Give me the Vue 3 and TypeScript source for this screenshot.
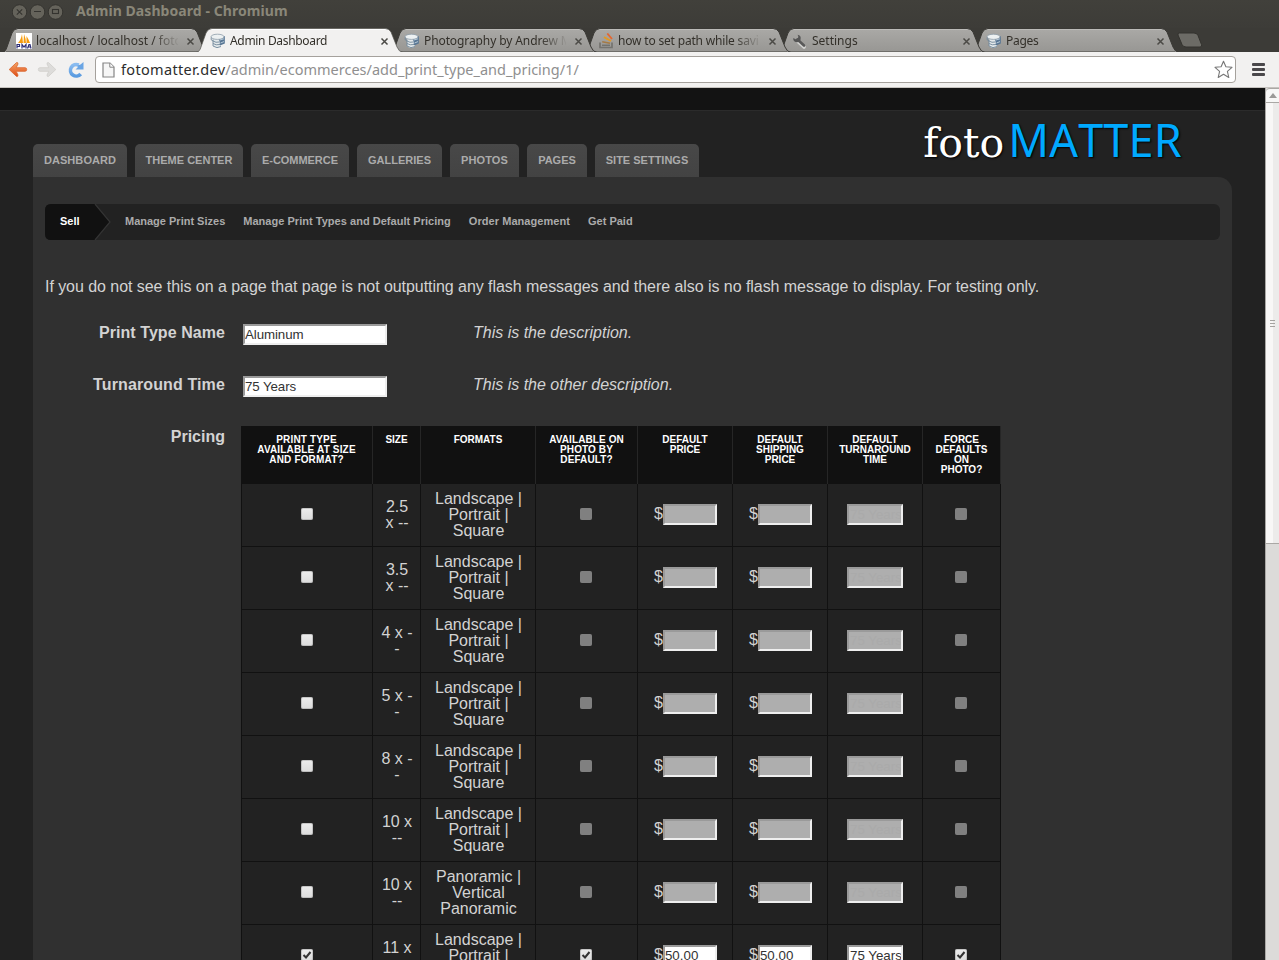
<script setup lang="ts">
interface BrowserTab {
  title: string
  icon: 'pma' | 'db' | 'stack' | 'wrench'
  active?: boolean
  spacing: string
}

interface PriceRow {
  size: string[]
  formats: string[]
  enabled: boolean
}

const tabs: BrowserTab[] = [
  { title: 'localhost / localhost / foto', icon: 'pma', spacing: 'a' },
  { title: 'Admin Dashboard', icon: 'db', active: true, spacing: 'b' },
  { title: 'Photography by Andrew M', icon: 'db', spacing: 'c' },
  { title: 'how to set path while savi', icon: 'stack', spacing: 'd' },
  { title: 'Settings', icon: 'wrench', spacing: 'e' },
  { title: 'Pages', icon: 'db', spacing: 'f' },
]

const nav = ['Dashboard', 'Theme Center', 'E-Commerce', 'Galleries', 'Photos', 'Pages', 'Site Settings']
const subnav = ['Manage Print Sizes', 'Manage Print Types and Default Pricing', 'Order Management', 'Get Paid']

const headers: string[][] = [
  ['Print Type', 'Available at Size', 'and Format?'],
  ['Size'],
  ['Formats'],
  ['Available on', 'Photo by', 'Default?'],
  ['Default', 'Price'],
  ['Default', 'Shipping', 'Price'],
  ['Default', 'Turnaround', 'Time'],
  ['Force', 'Defaults', 'on', 'Photo?'],
]

const lps = ['Landscape |', 'Portrait |', 'Square']
const rows: PriceRow[] = [
  { size: ['2.5', 'x --'], formats: lps, enabled: false },
  { size: ['3.5', 'x --'], formats: lps, enabled: false },
  { size: ['4 x -', '-'], formats: lps, enabled: false },
  { size: ['5 x -', '-'], formats: lps, enabled: false },
  { size: ['8 x -', '-'], formats: lps, enabled: false },
  { size: ['10 x', '--'], formats: lps, enabled: false },
  { size: ['10 x', '--'], formats: ['Panoramic |', 'Vertical', 'Panoramic'], enabled: false },
  { size: ['11 x', '--'], formats: lps, enabled: true },
]
</script>

<template>
  <div class="window">
    <div class="titlebar">
      <svg class="controls" width="52" height="16" viewBox="0 0 52 16">
        <g fill="#65635b" stroke="#34332f" stroke-width="1">
          <circle cx="7.5" cy="8" r="7.3" />
          <circle cx="25.5" cy="8" r="7.3" />
          <circle cx="43.5" cy="8" r="7.3" />
        </g>
        <g fill="none" stroke="#34332f" stroke-width="1.1">
          <path d="M4.8 5.3l5.4 5.4M10.2 5.3l-5.4 5.4M22 7.500h7" />
          <rect x="40.500" y="5.500" width="6" height="4" />
        </g>
      </svg>
      <span class="wintitle">Admin Dashboard - Chromium</span>
    </div>

    <div class="tabstrip">
      <div v-for="t in tabs" :key="t.title" class="tab" :class="[{ active: t.active }, 'sp-' + t.spacing]">
        <svg class="tabshape" width="208" height="24" viewBox="0 0 208 24">
          <defs>
            <linearGradient id="inactiveTab" x1="0" y1="0" x2="0" y2="1">
              <stop offset="0" stop-color="#aaa9a6" />
              <stop offset="1" stop-color="#979693" />
            </linearGradient>
          </defs>
          <path class="body" d="M0 24.5C3 24 4 22 5 19L10 5Q12 .5 16 .5H189Q193 .5 195 4L201 19Q203 24 207 24.5Z" :fill="t.active ? '#f2f1f0' : 'url(#inactiveTab)'" />
          <path v-if="!t.active" d="M4 23.5H203" stroke="#6f6e6a" />
          <path class="shine" d="M15 1.5H190" />
          <path class="edge" d="M0 24.5C3 24 4 22 5 19L10 5Q12 .5 16 .5H189Q193 .5 195 4L201 19Q203 24 207 24.5" />
        </svg>
        <svg v-if="t.icon === 'pma'" class="favicon" width="16" height="16" viewBox="0 0 16 16">
          <rect width="16" height="16" fill="#fff" />
          <path d="M2 10Q5 7 6 1L7 10ZM7.5 10L8 1Q10 6 10 10ZM10.5 10L10.5 3Q13 7 14 10Z" fill="#f69c0e" />
          <path d="M1 15.5V11.5H3.5V13.5H1M6 15.5V11.5L8 14L10 11.5V15.5M11.5 15.5L13 11.5H14L15 15.5M12 14H15" fill="none" stroke="#2d2f78" stroke-width="1.2" />
        </svg>
        <svg v-else-if="t.icon === 'db'" class="favicon" width="16" height="16" viewBox="0 0 16 16">
          <path d="M3 4V13Q6.500 16.500 11 13.500V4Z" fill="#e3e8ea" />
          <path d="M9 5L14.800 3V10.500L10 12.500Z" fill="#587694" />
          <ellipse cx="7.500" cy="3.800" rx="6.500" ry="2.600" fill="#edf1f2" stroke="#8d9ca8" stroke-width=".8" />
          <path d="M1.200 4.500V6.800L3 8M3 8Q6 10 9 9M3 10.500Q6 12.500 10 11.500M3 13Q7 16 11 13.500M3 6.500V13" fill="none" stroke="#72889b" stroke-width=".9" />
          <path d="M10 7L14 5.800M10.500 10L14 8.600" stroke="#b8cad8" />
        </svg>
        <svg v-else-if="t.icon === 'stack'" class="favicon" width="16" height="16" viewBox="0 0 16 16">
          <path d="M2 9.500V14.500H14V9.500" fill="none" stroke="#74736f" stroke-width="1.700" />
          <path d="M4 12.300H12" stroke="#74736f" stroke-width="1.500" />
          <path d="M4.200 8.700L12 10.300" stroke="#a57a45" stroke-width="1.600" />
          <path d="M6 4.200L13 8" stroke="#e29824" stroke-width="1.900" />
          <path d="M9.300.5L14 6" stroke="#e6652e" stroke-width="1.800" />
        </svg>
        <svg v-else class="favicon" width="16" height="16" viewBox="0 0 16 16">
          <path d="M6 7L12.500 13" stroke="#d3d3d1" stroke-width="3.600" stroke-linecap="round" transform="translate(-.5 1)" />
          <path d="M5.500 6.500L12 12.500" stroke="#595959" stroke-width="2.600" stroke-linecap="round" />
          <path d="M5.500 1.800A3.700 3.700 0 1 1 1.300 5L3.600 6.200L6 5.300L6.300 3.200Z" fill="#555" />
        </svg>
        <span class="tabtitle"><span>{{ t.title }}</span></span>
        <svg class="tabclose" width="9" height="9" viewBox="0 0 9 9"><path d="M1.500 1.500l6 6M7.500 1.500l-6 6" /></svg>
      </div>
      <svg class="newtab" width="28" height="17" viewBox="0 0 28 17">
        <path d="M3.500 1H18Q21 1 22 3.500L25.500 12.500Q26.500 15 24 15H10Q7 15 6 12.500L2 3Q1.500 1 3.500 1Z" fill="#6c6b66" stroke="#33322e" />
      </svg>
    </div>

    <div class="toolbar">
      <svg class="navicons" width="78" height="22" viewBox="0 0 78 22">
        <defs>
          <linearGradient id="backArrow" x1="0" y1="0" x2="0" y2="1">
            <stop offset="0" stop-color="#f5a566" />
            <stop offset="1" stop-color="#de4d18" />
          </linearGradient>
          <linearGradient id="reloadBlue" x1="0" y1="0" x2="0" y2="1">
            <stop offset="0" stop-color="#8abcf0" />
            <stop offset="1" stop-color="#5a9be0" />
          </linearGradient>
        </defs>
        <path d="M1.200 10.500L8.500 3.600Q10 3 10 5L8.200 8.700H17Q18.700 8.700 18.700 10.500T17 12.300H8.200L10 16Q10 18 8.500 17.400Z" fill="url(#backArrow)" stroke="#d9662f" stroke-width=".8" />
        <path d="M47.800 10.500L40.500 3.600Q39 3 39 5L40.800 8.700H32Q30.300 8.700 30.300 10.500T32 12.300H40.800L39 16Q39 18 40.500 17.400Z" fill="#dddcda" stroke="#cfceca" stroke-width=".8" />
        <path d="M71.500 6A5.800 5.800 0 1 0 73.500 15" fill="none" stroke="url(#reloadBlue)" stroke-width="3.600" transform="translate(-.8 0)" />
        <path d="M75.500 3V10.500H67.500L70 8L69.500 6.500L72.500 5.500Z" fill="#6aa5e4" />
      </svg>
      <div class="omnibox">
        <svg class="page" width="13" height="16" viewBox="0 0 13 16">
          <path d="M1 1H8L12 5V15H1Z" fill="#f6f6f6" stroke="#858585" stroke-width="1.200" />
          <path d="M7.800 1V5.200H12" fill="#fff" stroke="#858585" />
        </svg>
        <span class="host">fotomatter.dev</span><span class="path">/admin/ecommerces/add_print_type_and_pricing/1/</span>
        <svg class="star" width="19" height="19" viewBox="0 0 19 19">
          <path d="M9.500 1.200L11.900 6.800L18 7.300L13.400 11.300L14.800 17.500L9.500 14.200L4.200 17.500L5.600 11.300L1 7.300L7.100 6.800Z" fill="#fff" stroke="#777" stroke-width="1.100" stroke-linejoin="round" />
        </svg>
      </div>
      <div class="menu"><i></i><i></i><i></i></div>
    </div>

    <div class="viewport">
      <main class="site">
        <div class="topbar"></div>
        <header class="head">
          <nav class="nav"><a v-for="n in nav" :key="n">{{ n }}</a></nav>
          <div class="logo"><span class="foto">foto</span><span class="matter">MATTER</span></div>
        </header>
        <section class="panel">
          <div class="subnav">
            <div class="sell">
              <svg class="sellshape" width="66" height="36" viewBox="0 0 66 36">
                <path d="M6 0H50L64.500 18L50 36H6Q0 36 0 30V6Q0 0 6 0Z" fill="#111" />
                <path d="M50 0L65 18L50 36" fill="none" stroke="#343434" stroke-width="1.200" />
              </svg>
              <span>Sell</span>
            </div>
            <a v-for="s in subnav" :key="s">{{ s }}</a>
          </div>
          <p class="flash">If you do not see this on a page that page is not outputting any flash messages and there also is no flash message to display. For testing only.</p>
          <div class="field">
            <label>Print Type Name</label><div class="box wide">Aluminum</div><em>This is the description.</em>
          </div>
          <div class="field">
            <label class="snug">Turnaround Time</label><div class="box wide">75 Years</div><em>This is the other description.</em>
          </div>
          <div class="field pricing">
            <label>Pricing</label>
            <table>
              <colgroup>
                <col class="c1" /><col class="c2" /><col class="c3" /><col class="c4" />
                <col class="c5" /><col class="c5" /><col class="c5" /><col class="c8" />
              </colgroup>
              <thead>
                <tr>
                  <th v-for="(h, i) in headers" :key="i"><div v-for="l in h" :key="l">{{ l }}</div></th>
                </tr>
              </thead>
              <tbody>
                <tr v-for="(r, i) in rows" :key="i" :class="{ off: !r.enabled }">
                  <td><span class="check"><svg v-if="r.enabled" width="12" height="12" viewBox="0 0 12 12"><path d="M2.500 6L5 8.500L9.500 3" /></svg></span></td>
                  <td class="lines"><div v-for="l in r.size" :key="l">{{ l }}</div></td>
                  <td class="lines"><div v-for="l in r.formats" :key="l">{{ l }}</div></td>
                  <td class="even"><span class="check dim"><svg v-if="r.enabled" width="12" height="12" viewBox="0 0 12 12"><path d="M2.500 6L5 8.500L9.500 3" /></svg></span></td>
                  <td v-for="k in 2" :key="k"><div class="money"><span>$</span><div class="box price">{{ r.enabled ? '50.00' : '' }}</div></div></td>
                  <td><div class="box time">75 Years</div></td>
                  <td class="even"><span class="check dim"><svg v-if="r.enabled" width="12" height="12" viewBox="0 0 12 12"><path d="M2.500 6L5 8.500L9.500 3" /></svg></span></td>
                </tr>
              </tbody>
            </table>
          </div>
        </section>
      </main>
      <aside class="scrollbar">
        <div class="up"><svg width="8" height="5" viewBox="0 0 8 5"><path d="M4 0L8 5H0Z" fill="#9b9a98" /></svg></div>
        <div class="thumb"><i></i><i></i><i></i></div>
      </aside>
    </div>
  </div>
</template>

<style>
body { margin: 0; overflow: hidden; }
</style>

<style scoped>
.window { width: 1279px; height: 960px; overflow: hidden; display: flex; flex-direction: column; font-family: "Liberation Sans", Arial, sans-serif; background: #3c3b37; }
.titlebar { height: 28px; flex: none; display: flex; align-items: flex-start; background: linear-gradient(#41403b, #3d3c38); box-sizing: border-box; padding-left: 12px; }
.controls { margin-top: 4px; }
.wintitle { margin-left: 12px; font: 700 14px/22px "Noto Sans", sans-serif; color: #8a8779; letter-spacing: 0.07px; white-space: nowrap; }
.tabstrip { height: 24px; flex: none; display: flex; padding-left: 2px; background: #3c3b37; position: relative; }
.tab { position: relative; width: 194px; height: 24px; flex: none; display: flex; align-items: center; box-sizing: border-box; padding-left: 14px; font: 12px/24px "Noto Sans", sans-serif; color: #33302a; }
.tab:nth-child(1) { z-index: 6; }
.tab:nth-child(2) { z-index: 9; }
.tab:nth-child(3) { z-index: 5; }
.tab:nth-child(4) { z-index: 4; }
.tab:nth-child(5) { z-index: 3; }
.tab:nth-child(6) { z-index: 2; }
.tabshape { position: absolute; left: 0; top: 0; }
.edge { fill: none; stroke: #3a3935; }
.active .edge { stroke: #55544f; stroke-width: .7; }
.shine { stroke: #bcbbb8; }
.active .shine { stroke: #fff; }
.favicon { position: relative; top: 1px; flex: none; }
.tabtitle { position: relative; top: 1px; margin-left: 4px; width: 142px; height: 24px; flex: none; overflow: hidden; white-space: nowrap; mask-image: linear-gradient(90deg, #000 116px, transparent 144px); }
.tabclose { position: relative; top: 1px; margin-left: 7.500px; flex: none; }
.tabclose path { stroke: #4b4a46; stroke-width: 1.5; fill: none; }
.sp-b { letter-spacing: -0.33px; }
.sp-c { letter-spacing: -0.1px; }
.sp-d { letter-spacing: -0.18px; }
.sp-f { letter-spacing: -0.3px; }
.newtab { margin-left: 10px; margin-top: 4px; }
.toolbar { height: 36px; flex: none; display: flex; align-items: flex-start; background: #f2f1f0; border-bottom: 1px solid #c6c3bf; box-sizing: border-box; padding-left: 8px; }
.navicons { margin-top: 7px; flex: none; }
.omnibox { margin: 4px 0 0 9px; width: 1141px; height: 27px; box-sizing: border-box; border: 1px solid #a5a19c; border-radius: 4px; background: #fff; display: flex; align-items: center; font: 14.500px/25px "Noto Sans", sans-serif; color: #2c2c2c; }
.page { margin: 0 6px 0 6px; flex: none; }
.host { letter-spacing: 0.32px; }
.path { color: #8f8f8f; letter-spacing: 0.01px; }
.star { margin-left: auto; margin-right: 2px; }
.menu { margin: 11px 0 0 16px; display: flex; flex-direction: column; gap: 2px; }
.menu i { width: 13px; height: 3px; border-radius: 1px; background: #4a484b; }
.viewport { flex: 1; display: flex; min-height: 0; }
.site { width: 1265px; flex: none; background: #222; overflow: hidden; }
.topbar { height: 22px; background: #131313; border-bottom: 1px solid #2b2b2b; }
.head { height: 66px; display: flex; align-items: flex-end; padding: 0 83px 0 33px; }
.nav { display: flex; gap: 8px; }
.nav a { height: 33px; box-sizing: border-box; text-align: center; background: linear-gradient(#484848, #434343); border-radius: 5px 5px 0 0; font-size: 11px; font-weight: 700; line-height: 33px; color: #ababab; text-transform: uppercase; white-space: nowrap; }
.nav a:nth-child(1) { width: 94px; letter-spacing: 0.08px; }
.nav a:nth-child(2) { width: 108px; }
.nav a:nth-child(3) { width: 98px; letter-spacing: -0.05px; }
.nav a:nth-child(4) { width: 85px; }
.nav a:nth-child(5) { width: 69px; letter-spacing: 0.1px; }
.nav a:nth-child(6) { width: 60px; }
.nav a:nth-child(7) { width: 104px; }
.logo { margin-left: auto; height: 66px; display: flex; align-items: baseline; line-height: 57px; text-shadow: 1px 1px 2px #000; white-space: nowrap; }
.foto { font-family: "DejaVu Serif", serif; font-size: 41px; color: #fff; }
.matter { margin-left: 4px; font-family: "Noto Sans", sans-serif; font-size: 45px; color: #00a9ff; font-kerning: none; letter-spacing: 0.200px; }
.panel { margin-left: 33px; width: 1199px; height: 900px; box-sizing: border-box; padding: 27px 12px 0; background: #303030; border-radius: 0 14px 0 0; color: #d3d3d3; font-size: 16px; }
.subnav { height: 36px; background: #222; border-radius: 6px; display: flex; align-items: center; gap: 18px; font-size: 11px; font-weight: 700; color: #ababab; line-height: 34px; white-space: nowrap; }
.subnav a { height: 36px; }
.subnav a:nth-of-type(2) { letter-spacing: 0.03px; }
.subnav a:nth-of-type(3) { letter-spacing: 0.06px; }
.sell { position: relative; width: 62px; height: 36px; color: #fff; }
.sellshape { position: absolute; left: 0; top: 0; }
.sell span { position: relative; margin-left: 15px; }
.flash { margin: 39px 0 0; line-height: 16px; white-space: nowrap; letter-spacing: -0.053px; }
.field { display: flex; height: 52px; line-height: 18px; }
.flash + .field { margin-top: 29px; }
.field label { width: 180px; margin-right: 18px; flex: none; text-align: right; font-weight: 700; letter-spacing: 0.06px; }
.field .snug { letter-spacing: 0.12px; }
.field em { margin-left: 86px; }
.box { height: 21px; box-sizing: border-box; border: 2px solid; border-color: #9a9a9a #eee #eee #9a9a9a; background: #fff; color: #333; font-size: 13.333px; line-height: 17px; text-align: left; overflow: hidden; white-space: nowrap; }
.wide { width: 144px; letter-spacing: -0.1px; }
.pricing { height: auto; }
.pricing label { margin-right: 16px; letter-spacing: 0; }
table { margin-top: -2px; width: 760px; table-layout: fixed; border-collapse: separate; border-spacing: 0; border-left: 1px solid #111; background: #222; flex: none; }
.c1 { width: 131px; } .c2 { width: 48px; } .c3 { width: 115px; } .c4 { width: 102px; } .c5 { width: 95px; } .c8 { width: 78px; }
th { height: 58px; box-sizing: border-box; padding: 9px 0 0; vertical-align: top; background: #111; border-right: 1px solid #262626; color: #fff; font-size: 10px; line-height: 10px; text-transform: uppercase; }
th:nth-child(1) { letter-spacing: 0.16px; padding-right: 1px; }
th:nth-child(4) { letter-spacing: 0.1px; }
td { height: 63px; box-sizing: border-box; padding: 0 0 2px; vertical-align: middle; text-align: center; border-right: 1px solid #111; border-bottom: 1px solid #111; line-height: 16px; }
td.lines { padding: 0 0 0 1px; }
td.even { padding-right: 1px; }
.check { display: block; width: 12px; height: 12px; margin: 0 auto; border-radius: 2px; background: linear-gradient(#ededed, #dcdcdc); box-shadow: inset 0 0 0 1px rgba(130, 130, 130, .35); }
.check svg { display: block; }
.check path { fill: none; stroke: #333; stroke-width: 2; }
.off .dim { background: #808080; }
.money { display: flex; justify-content: center; align-items: center; padding-left: 1px; }
.money .price { width: 54px; }
.time { width: 56px; margin: 0 auto; padding-left: 1px; }
.off .box { background: #aeaeae; color: #aaa; }
.scrollbar { width: 14px; box-sizing: border-box; border-left: 1px solid #aaa8a5; background: #dcdbd9; }
.up { height: 15px; box-sizing: border-box; border: 1px solid #aaa8a5; border-width: 1px 0; border-radius: 4px 0 0 0; background: #f7f7f6; display: flex; align-items: center; justify-content: center; }
.thumb { height: 441px; box-sizing: border-box; border-bottom: 1px solid #aaa8a5; background: linear-gradient(90deg, #f8f7f6 7px, #ecebea 7px); display: flex; flex-direction: column; align-items: center; justify-content: center; gap: 2px; }
.thumb i { width: 5px; height: 1px; background: #a5a3a0; }
</style>
